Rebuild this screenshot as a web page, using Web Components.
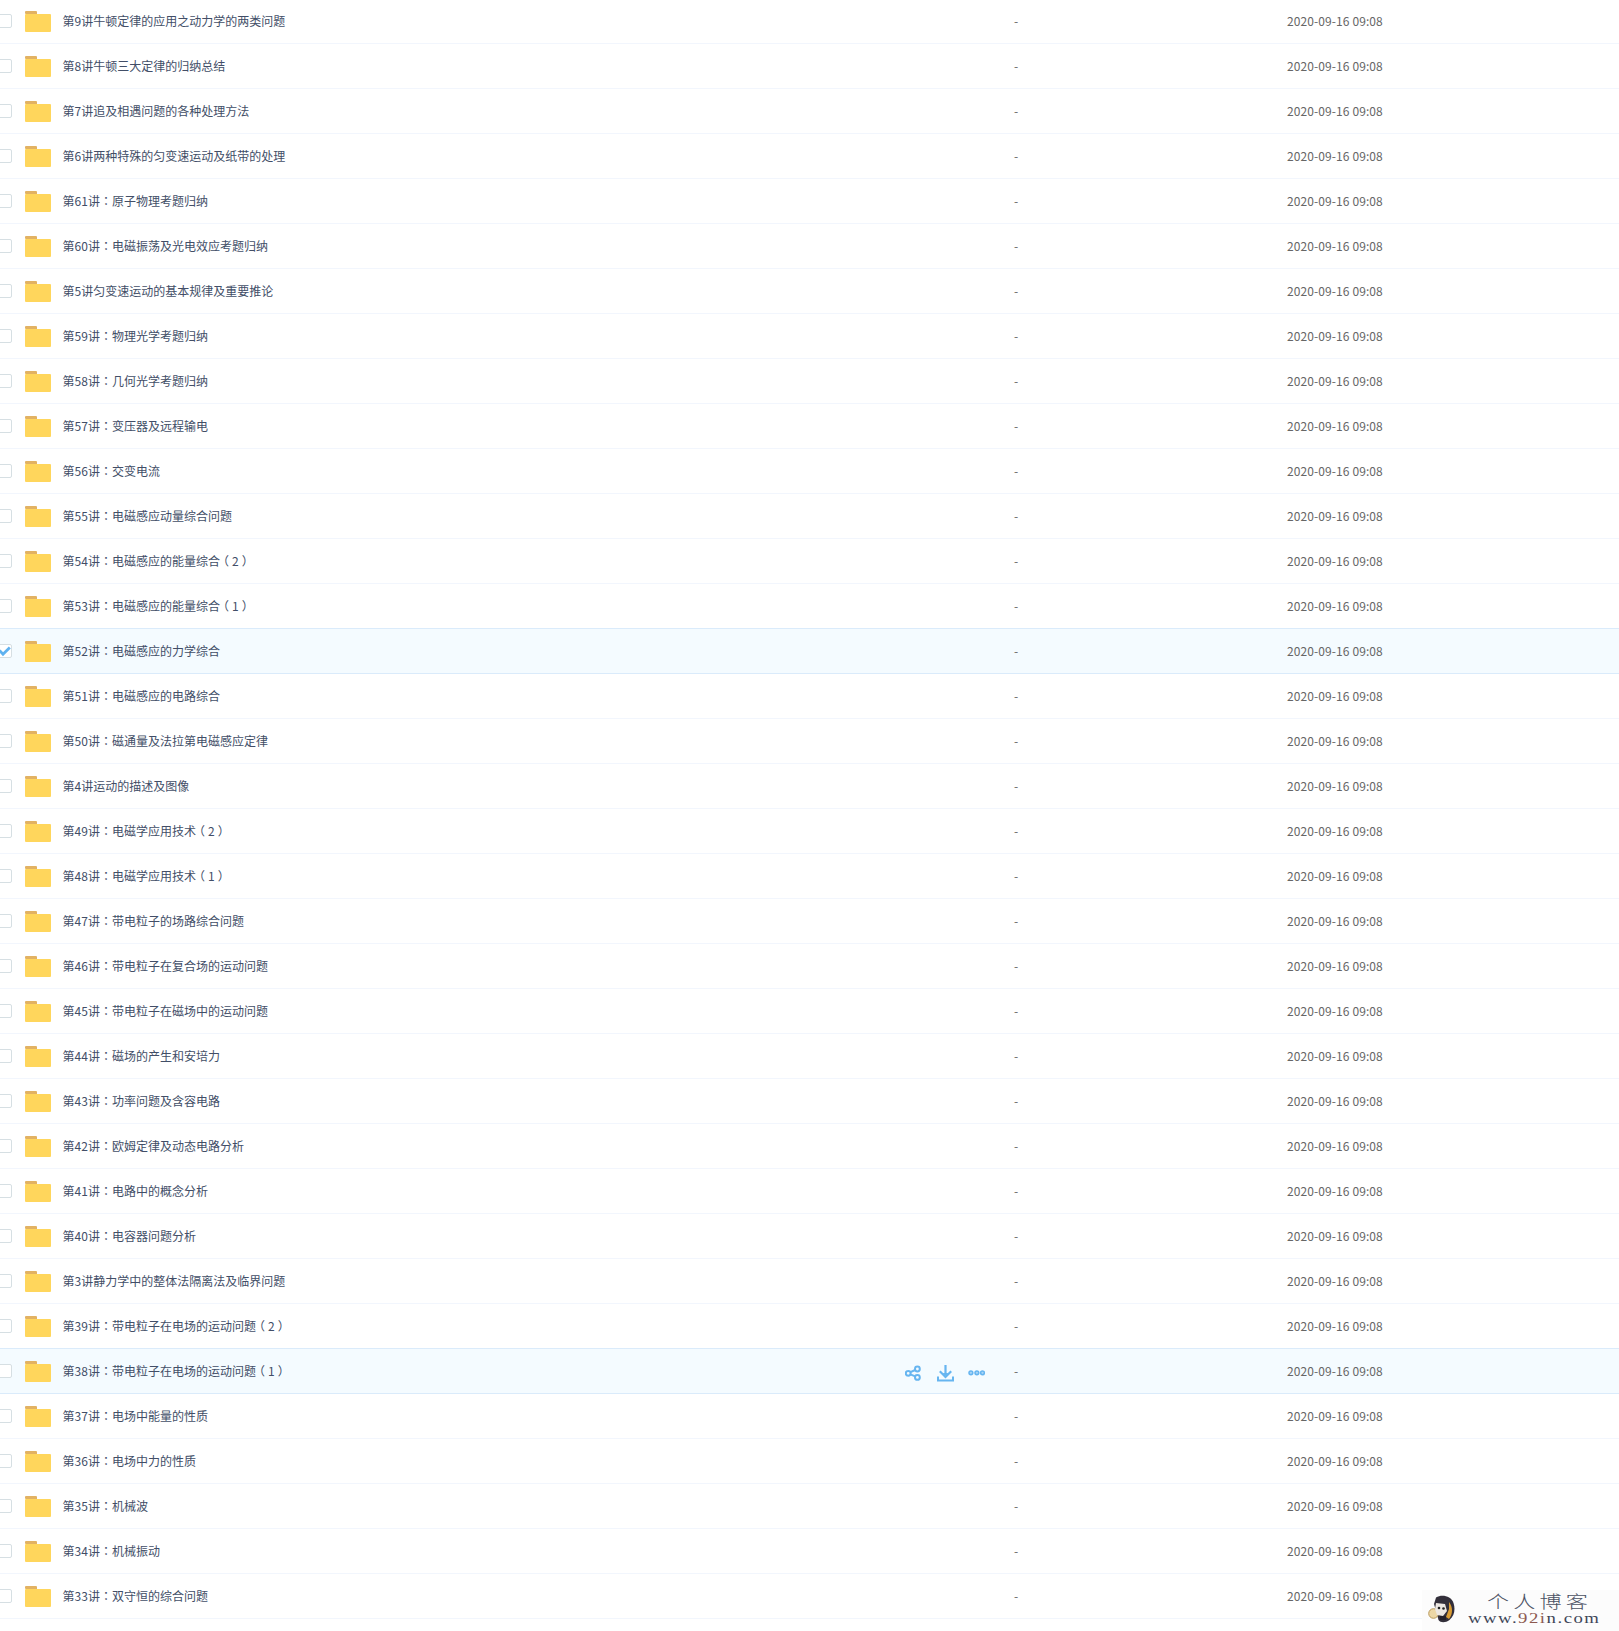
<!DOCTYPE html>
<html lang="zh-CN"><head><meta charset="utf-8">
<style>
html,body{margin:0;padding:0;background:#fff;height:1631px;overflow:hidden}
body{font-family:"Noto Sans CJK SC","Noto Sans",sans-serif;font-size:12px;color:#666}
</style></head><body>
<file-list></file-list>
<site-mark></site-mark>
<script>
const names=`第9讲牛顿定律的应用之动力学的两类问题
第8讲牛顿三大定律的归纳总结
第7讲追及相遇问题的各种处理方法
第6讲两种特殊的匀变速运动及纸带的处理
第61讲：原子物理考题归纳
第60讲：电磁振荡及光电效应考题归纳
第5讲匀变速运动的基本规律及重要推论
第59讲：物理光学考题归纳
第58讲：几何光学考题归纳
第57讲：变压器及远程输电
第56讲：交变电流
第55讲：电磁感应动量综合问题
第54讲：电磁感应的能量综合（2）
第53讲：电磁感应的能量综合（1）
第52讲：电磁感应的力学综合
第51讲：电磁感应的电路综合
第50讲：磁通量及法拉第电磁感应定律
第4讲运动的描述及图像
第49讲：电磁学应用技术（2）
第48讲：电磁学应用技术（1）
第47讲：带电粒子的场路综合问题
第46讲：带电粒子在复合场的运动问题
第45讲：带电粒子在磁场中的运动问题
第44讲：磁场的产生和安培力
第43讲：功率问题及含容电路
第42讲：欧姆定律及动态电路分析
第41讲：电路中的概念分析
第40讲：电容器问题分析
第3讲静力学中的整体法隔离法及临界问题
第39讲：带电粒子在电场的运动问题（2）
第38讲：带电粒子在电场的运动问题（1）
第37讲：电场中能量的性质
第36讲：电场中力的性质
第35讲：机械波
第34讲：机械振动
第33讲：双守恒的综合问题`.split('\n');

class FolderIcon extends HTMLElement{constructor(){super();this.attachShadow({mode:'open'}).innerHTML=`<style>:host{display:block;width:26px;height:21px;flex:none}svg{display:block}</style>
<svg width="26" height="21" viewBox="0 0 26 21"><path d="M1 0H11a1 1 0 0 1 1 1V3H1a1 1 0 0 1-1-1V1a1 1 0 0 1 1-1z" fill="#e2b263"/><path d="M1 3H25a1 1 0 0 1 1 1V20a1 1 0 0 1-1 1H1a1 1 0 0 1-1-1V4a1 1 0 0 1 1-1z" fill="#ffd65c"/></svg>`}}
customElements.define('folder-icon',FolderIcon);

class CheckMark extends HTMLElement{constructor(){super();this.attachShadow({mode:'open'}).innerHTML=`<style>:host{display:block;width:14px;height:14px;box-sizing:border-box;border:1px solid #d6dfe3;border-radius:2px;background:#fff;flex:none;position:relative}
svg{display:none;position:absolute;left:-1px;top:-1px}:host([checked]) svg{display:block}</style>
<svg width="14" height="14" viewBox="0 0 14 14"><path d="M1.5 6.5L5 10.2l6.8-6.7" fill="none" stroke="#5fb2f0" stroke-width="2.8"/></svg>`}}
customElements.define('check-mark',CheckMark);

class RowActions extends HTMLElement{constructor(){super();this.attachShadow({mode:'open'}).innerHTML=`<style>:host{display:flex;align-items:center;flex:none}svg{display:block;flex:none}
.a{margin-right:16px}.b{margin-right:14px}</style>
<svg class="a" width="16" height="17" viewBox="0 0 16 17" fill="none" stroke="#66b5f0" stroke-width="2"><circle cx="3.2" cy="8.3" r="2.4"/><circle cx="12.4" cy="4" r="2.4"/><circle cx="12.4" cy="12.4" r="2.4"/><path d="M5.4 7.2L10.2 5M5.4 9.4L10.2 11.4"/></svg>
<svg class="b" width="17" height="17" viewBox="0 0 17 17" fill="none" stroke="#66b5f0" stroke-width="2.2"><path d="M8.5 0V10"/><path d="M2.8 6.2L8.5 12 14.2 6.2" /><path d="M5.5 8H11.5L8.5 11z" fill="#66b5f0" stroke="none"/><path d="M1 11.6V15.4H16V11.6" stroke-width="2"/></svg>
<svg width="17" height="17" viewBox="0 0 17 17" fill="#a9d5f6" stroke="#66b5f0" stroke-width="1.5"><circle cx="2.9" cy="7.8" r="1.9"/><circle cx="8.9" cy="7.8" r="1.9"/><circle cx="14.5" cy="7.8" r="1.9"/></svg>`}}
customElements.define('row-actions',RowActions);

class FileRow extends HTMLElement{constructor(){super();this.attachShadow({mode:'open'}).innerHTML=`<style>
:host{display:flex;align-items:center;box-sizing:border-box;height:45px;border-bottom:1px solid #f2f6fd;background:#fff}
:host([active]){background:#f4fbff;border-bottom-color:#daebfb}
check-mark{margin-left:-2px;margin-right:13px}
folder-icon{margin-right:11.6px}
.name{flex:none;width:922.4px;display:flex;align-items:center;box-sizing:border-box;color:#424e67;white-space:nowrap;line-height:20px}
.t{flex:1 1 auto}
.acts{display:none;margin-top:4px}
:host([hovered]) .acts{display:flex}
.size{flex:none;width:273px;margin-left:29px;color:#666;line-height:20px}
.date{color:#666;line-height:20px;white-space:nowrap;letter-spacing:.1px}
</style>
<check-mark></check-mark><folder-icon></folder-icon>
<div class="name"><span class="t"><slot></slot></span><row-actions class="acts"></row-actions></div>
<div class="size">-</div><div class="date">2020-09-16 09:08</div>`;
}
connectedCallback(){if(this.hasAttribute('checked'))this.shadowRoot.querySelector('check-mark').setAttribute('checked','')}}
customElements.define('file-row',FileRow);

function fillName(row,n){
  for(const part of n.split(/([：（）])/)){
    if(!part)continue;
    if(part==='：'){const s=document.createElement('span');s.lang='zh-TW';s.style.fontFamily='"Noto Sans CJK TC",sans-serif';s.textContent=part;row.appendChild(s)}
    else if(part==='（'||part==='）'){const s=document.createElement('span');s.style.cssText='font-feature-settings:"halt";padding:0 3px';s.textContent=part;row.appendChild(s)}
    else row.appendChild(document.createTextNode(part));
  }
}
class FileList extends HTMLElement{constructor(){super();const s=this.attachShadow({mode:'open'});
s.innerHTML=`<style>:host{display:block;margin-top:-1px}</style>`;
names.forEach((n,i)=>{const r=document.createElement('file-row');fillName(r,n);
 if(i==14)r.setAttribute('checked','');
 if(i==14||i==30)r.setAttribute('active','');
 if(i==13||i==29)r.style.borderBottomColor='#daebfb';
 if(i==30)r.setAttribute('hovered','');
 s.appendChild(r)});}}
customElements.define('file-list',FileList);

class SiteMark extends HTMLElement{constructor(){super();this.attachShadow({mode:'open'}).innerHTML=`<style>
:host{position:absolute;right:0;bottom:0;width:197px;height:41px;background:rgba(252,252,252,.92);display:flex;align-items:flex-start;box-sizing:border-box}
svg{flex:none;margin:5px 0 0 6px;display:block}
.txt{display:block;margin:3px 0 0 12px;color:#4a5163}
.a{display:block;height:15px;margin-left:19px;font:300 17px/15px "Noto Sans CJK SC",sans-serif;letter-spacing:3.2px;transform:scaleX(1.3);transform-origin:0 50%;white-space:nowrap}
.b{display:block;height:11px;margin-top:4.5px;font:15px/11px "Liberation Serif",serif;letter-spacing:1.2px;transform:scaleX(1.25);transform-origin:0 50%;white-space:nowrap;color:#3f4658}
.b i{font-style:normal;color:#8d5a50}
</style>
<svg width="28" height="28" viewBox="0 0 28 28"><path d="M8 2.5C14 -1 23 1 25.5 8c2 6 1 13-4 17-4 3-9 3-11 0L6 9z" fill="#332f3a"/><path d="M21 7c4 5 4 12 0 17l-3-2 3-8z" fill="#d99c34"/><circle cx="5.5" cy="18.5" r="4.8" fill="#ecd7a6" stroke="#b99a5c"/><path d="M8 8l9 1 2 7-4 5-6-1-2-6z" fill="#ece7e2"/><circle cx="11" cy="13" r="1.3" fill="#222"/><circle cx="15.5" cy="13.5" r="1.3" fill="#222"/><path d="M12 21h6v4h-6z" fill="#23202a"/></svg>
<div class="txt"><span class="a">个人博客</span><span class="b">www.<i>92i</i>n.com</span></div>`}}
customElements.define('site-mark',SiteMark);
</script></body></html>
